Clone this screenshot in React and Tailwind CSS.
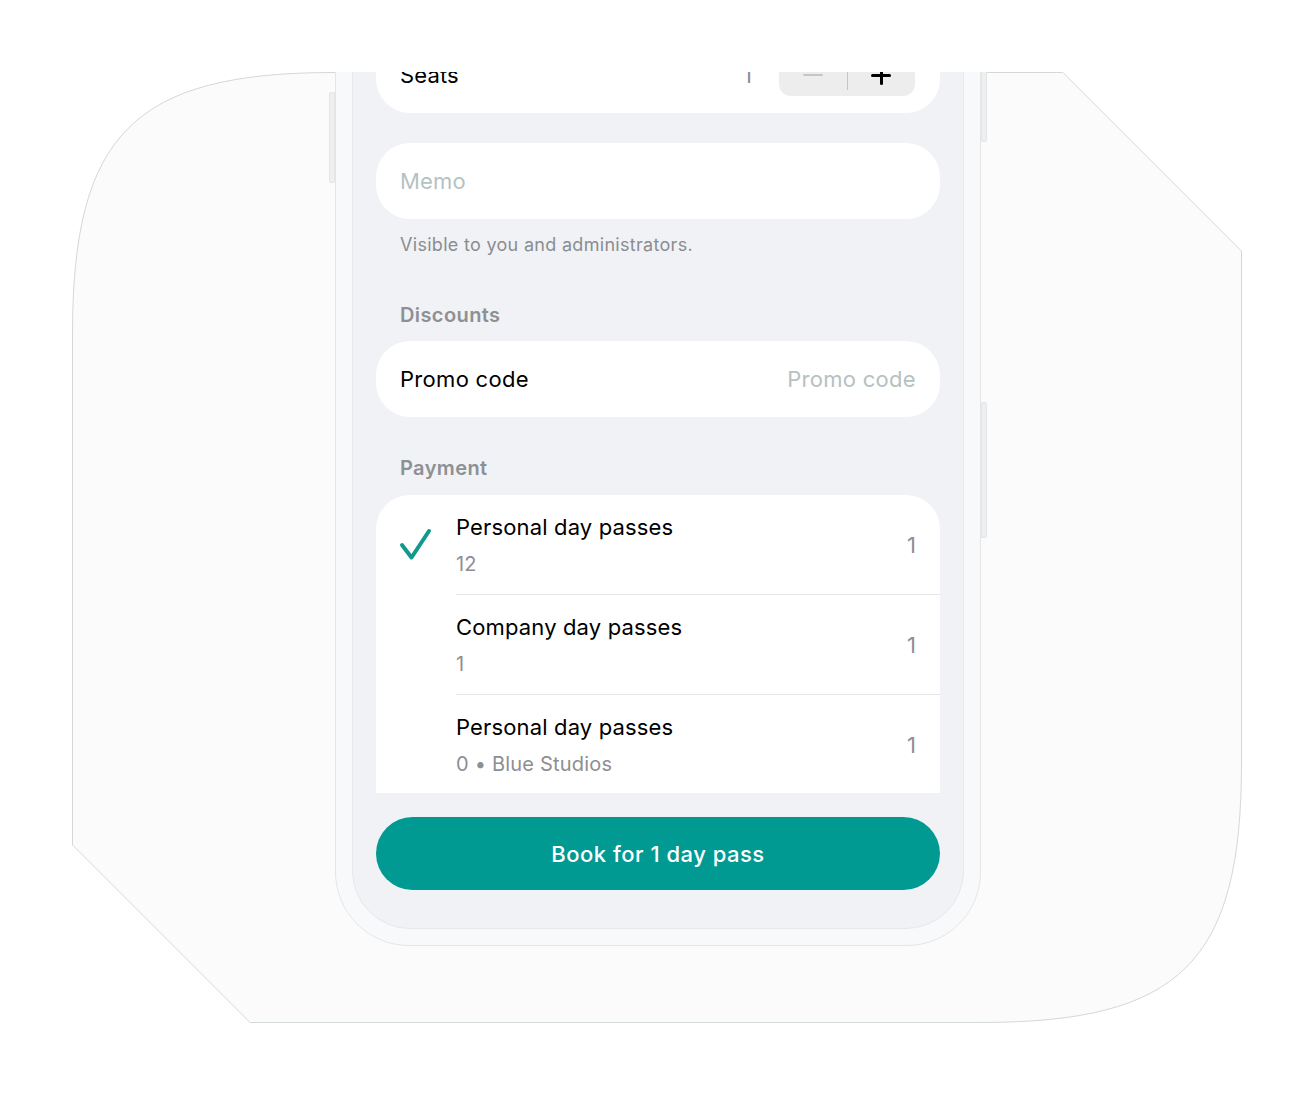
import React from "react";

function Check() {
  return (
    <svg width="34" height="34" viewBox="0 0 34 34" fill="none">
      <path d="M4 17 L13.5 29.5 L31 3" stroke="#13988e" strokeWidth="4" strokeLinecap="round" strokeLinejoin="round" />
    </svg>
  );
}

function PayRow({ checked, title, sub, last }) {
  return (
    <div className="flex h-[100px] items-stretch">
      <div className="flex w-[80px] shrink-0 items-center pl-[22px]">{checked ? <Check /> : null}</div>
      <div className={"flex flex-1 items-center justify-between pr-[24px] " + (last ? "" : "border-b border-[#e6e6ea]")}>
        <div className="flex flex-col gap-[10px]">
          <div className="text-[22px] leading-[28px] tracking-[0.15px] text-black">{title}</div>
          <div className="text-[20px] leading-[26px] tracking-[0.2px] text-[#8e8e93]">{sub}</div>
        </div>
        <div className="text-[22px] leading-[28px] text-[#8e8e93]">1</div>
      </div>
    </div>
  );
}

export default function App() {
  return (
    <div className="h-[1096px] w-[1314px] bg-white pt-[72px]" style={{ fontFamily: "Inter, 'Noto Sans', sans-serif" }}>
      <div className="relative ml-[72px] h-[951px] w-[1170px] overflow-hidden">
        <svg className="absolute left-0 top-0" width="1170" height="951" viewBox="0 0 1170 951">
          <path
            d="M0.5 262 C0.5 62 62 0.5 262 0.5 L991 0.5 L1169.5 179 L1169.5 691 C1169.5 891 1108 950.5 908 950.5 L178 950.5 L0.5 773 Z"
            fill="#fbfbfb"
            stroke="#d3d8d9"
          />
        </svg>

        <div className="relative -mt-[80px] ml-[263px] w-[646px]">
          {/* side buttons */}
          <div className="absolute left-[-6px] top-[100px] h-[91px] w-[6px] rounded-l-[2px] border border-[#e4e5e7] bg-[#eeeff0]" />
          <div className="absolute right-[-6px] top-[60px] h-[90px] w-[6px] rounded-r-[2px] border border-[#e4e5e7] bg-[#eeeff0]" />
          <div className="absolute right-[-6px] top-[410px] h-[136px] w-[6px] rounded-r-[2px] border border-[#e4e5e7] bg-[#eeeff0]" />

          <div className="relative rounded-b-[74px] border border-[#e5e6e8] bg-[#f8f9fa] px-[16px] pb-[16px] pt-[16px]">
            <div className="rounded-b-[58px] border border-[#e7e8eb] bg-[#f1f2f5] px-[23px] pb-[38px] pt-[27px]">
              {/* Seats */}
              <div className="flex h-[76px] items-center rounded-[34px] bg-white pl-[24px] pr-[25px]">
                <div className="flex-1 text-[22px] leading-[28px] tracking-[0.15px] text-black">Seats</div>
                <div className="mr-[27px] text-[22px] leading-[28px] text-[#8e8e93]">1</div>
                <div className="flex h-[42px] w-[136px] items-center rounded-[12px] bg-[#ededee]">
                  <div className="flex flex-1 items-center justify-center">
                    <div className="h-[2px] w-[20px] rounded bg-[#c3c6c9]" />
                  </div>
                  <div className="h-[30px] w-[1px] bg-[#c6c6c9]" />
                  <div className="relative flex flex-1 items-center justify-center">
                    <div className="relative h-[20px] w-[20px]">
                      <div className="absolute left-0 top-[9px] h-[3px] w-[20px] rounded bg-black" />
                      <div className="absolute left-[9px] top-0 h-[20px] w-[3px] rounded bg-black" />
                    </div>
                  </div>
                </div>
              </div>

              {/* Memo */}
              <div className="mt-[30px] flex h-[76px] items-center rounded-[34px] bg-white px-[24px]">
                <div className="text-[22px] leading-[28px] tracking-[0.2px] text-[#b6c1c2]">Memo</div>
              </div>
              <div className="mt-[15px] px-[24px] text-[18px] leading-[22px] tracking-[0.3px] text-[#8a8d91]">Visible to you and administrators.</div>

              {/* Discounts */}
              <div className="mt-[47px] px-[24px] text-[20px] font-semibold leading-[24px] tracking-[0.4px] text-[#8d9094]">Discounts</div>
              <div className="mt-[14px] flex h-[76px] items-center justify-between rounded-[34px] bg-white px-[24px]">
                <div className="text-[22px] leading-[28px] tracking-[0.3px] text-black">Promo code</div>
                <div className="text-[22px] leading-[28px] tracking-[0.3px] text-[#b6c1c2]">Promo code</div>
              </div>

              {/* Payment */}
              <div className="mt-[39px] px-[24px] text-[20px] font-semibold leading-[24px] tracking-[0.4px] text-[#8d9094]">Payment</div>
              <div className="mt-[15px] h-[298px] overflow-hidden rounded-t-[34px] bg-white">
                <PayRow checked title="Personal day passes" sub="12" />
                <PayRow title="Company day passes" sub="1" />
                <PayRow title="Personal day passes" sub="0 • Blue Studios" last />
              </div>

              {/* Button */}
              <div className="mt-[24px] flex h-[73px] items-center justify-center rounded-full bg-[#009a93]">
                <div className="text-[22px] font-medium leading-[28px] tracking-[0.5px] text-white">Book for 1 day pass</div>
              </div>
            </div>
          </div>
        </div>
      </div>
    </div>
  );
}
